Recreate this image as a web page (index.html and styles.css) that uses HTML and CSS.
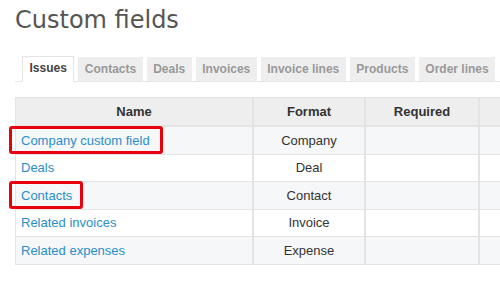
FILE: index.html
```html
<!DOCTYPE html>
<html lang="en">
<head>
  <meta charset="UTF-8" />
  <title>Custom fields</title>
  <link rel="stylesheet" href="styles.css">
</head>
<body>
  <h2 class="title">Custom fields</h2>

  <ul class="tabs">
    <li class="tab selected">Issues</li>
    <li class="tab">Contacts</li>
    <li class="tab">Deals</li>
    <li class="tab">Invoices</li>
    <li class="tab">Invoice lines</li>
    <li class="tab">Products</li>
    <li class="tab">Order lines</li>
  </ul>

  <table class="list">
    <thead>
      <tr>
        <th class="col-name">Name</th>
        <th class="col-format">Format</th>
        <th class="col-required">Required</th>
        <th class="col-extra"></th>
      </tr>
    </thead>
    <tbody>
      <tr class="odd">
        <td class="name"><a href="#">Company custom field</a><span class="mark mark-wide"></span></td>
        <td>Company</td><td></td><td></td>
      </tr>
      <tr class="even">
        <td class="name"><a href="#">Deals</a></td>
        <td>Deal</td><td></td><td></td>
      </tr>
      <tr class="odd">
        <td class="name"><a href="#">Contacts</a><span class="mark mark-narrow"></span></td>
        <td>Contact</td><td></td><td></td>
      </tr>
      <tr class="even">
        <td class="name"><a href="#">Related invoices</a></td>
        <td>Invoice</td><td></td><td></td>
      </tr>
      <tr class="odd">
        <td class="name"><a href="#">Related expenses</a></td>
        <td>Expense</td><td></td><td></td>
      </tr>
    </tbody>
  </table>
</body>
</html>
```

FILE: styles.css
```css
body {
  margin: 0;
  padding: 0 0 0 15px;
  background: #ffffff;
  color: #333333;
  font-family: "Liberation Sans", Arial, sans-serif;
  font-size: 13px;
  overflow: hidden;
  width: 600px;
}
.title {
  margin: 0;
  padding-top: 4px;
  font-family: "DejaVu Sans", Verdana, sans-serif;
  font-weight: normal;
  font-size: 24px;
  line-height: 32px;
  color: #555555;
}
.tabs {
  list-style: none;
  margin: 21px 0 0 0;
  padding: 0 0 0 7px;
  display: flex;
  gap: 4px;
  border-bottom: 1px solid #e4e4e4;
  height: 24px;
}
.tab {
  height: 24px;
  line-height: 24px;
  padding: 0 6.5px;
  background: #eeeeee;
  color: #999999;
  font-weight: bold;
  font-size: 12px;
}
.tab.selected {
  background: #ffffff;
  color: #444444;
  border: 1px solid #e4e4e4;
  border-bottom: 1px solid #ffffff;
  height: 24px;
  margin-top: -1px;
  line-height: 23px;
}
.list {
  margin-top: 15px;
  border-collapse: collapse;
  table-layout: fixed;
  width: 520px;
  border: 1px solid #e4e4e4;
}
.list th {
  background: #eeeeee;
  color: #333333;
  font-weight: bold;
  height: 27px;
  padding: 0 4px;
  border: 2px solid #e4e4e4;
  border-width: 0 2px 2px 0;
}
.list td {
  height: 26.5px;
  padding: 0 5px;
  text-align: center;
  border: 1px solid #e4e4e4;
  border-width: 1px 2px 1px 0;
}
.col-name { width: 228px; }
.col-format { width: 102px; }
.col-required { width: 104px; }
.list tr.odd td { background: #f6f7f8; }
.list tr.even td { background: #ffffff; }
.list td.name {
  text-align: left;
  position: relative;
}
.list a {
  color: #2a8ec8;
  text-decoration: none;
}
.mark {
  position: absolute;
  top: -1px;
  left: -7px;
  height: 28px;
  border: 3px solid #e8000c;
  border-radius: 3px;
  box-sizing: border-box;
}
.mark-wide { width: 154px; }
.mark-narrow { width: 74px; }
```
